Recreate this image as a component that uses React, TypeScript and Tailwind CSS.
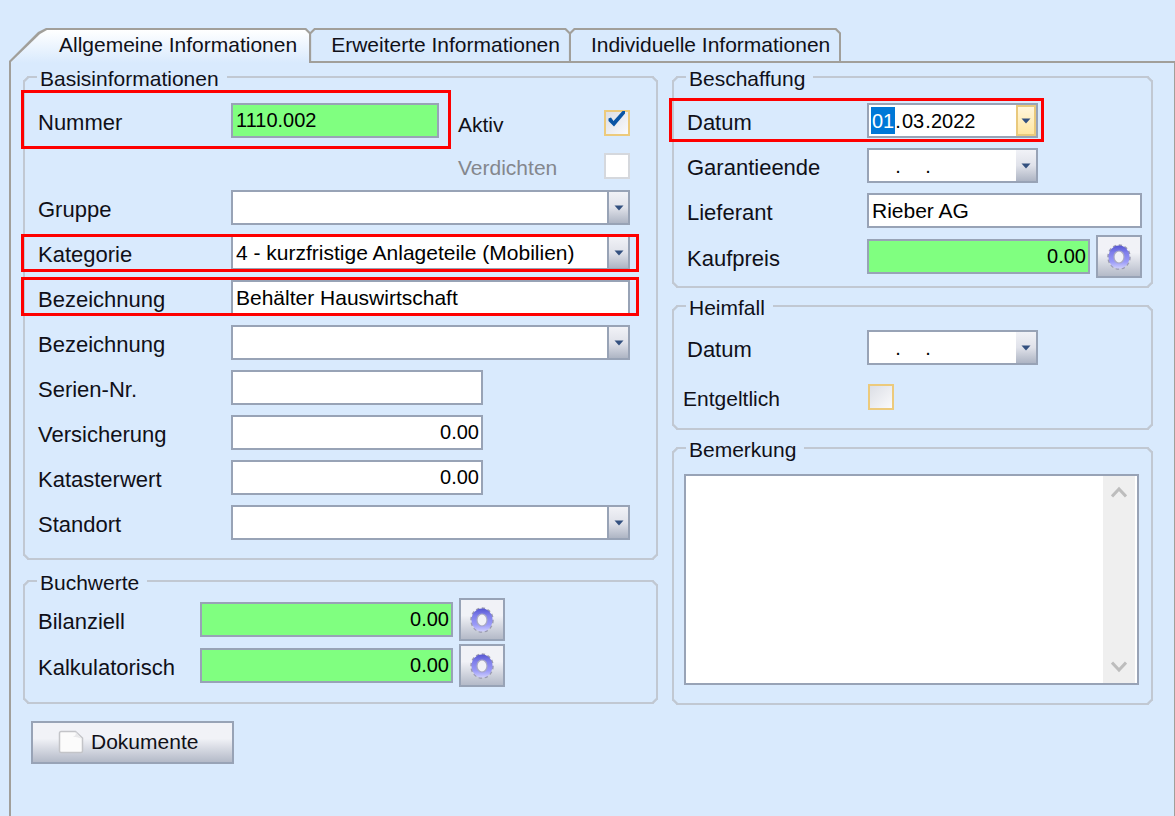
import { useState, type ReactNode } from "react";
import clsx from "clsx";

const box = "h-[35px] border-2 border-[#98a3b6] text-black outline-none";

function Marker({ className }: { className: string }) {
    return <span className={clsx("pointer-events-none absolute border-[3px] border-[#fe0000]", className)} />;
}

function Arrow() {
    return (
        <svg width="10" height="6" viewBox="0 0 10 6" aria-hidden="true">
            <path d="M0.5 0.5h9L5 5.5z" fill="#33507f" />
        </svg>
    );
}

function Gear() {
    return (
        <svg width="26" height="28" viewBox="0 0 26 28" aria-hidden="true">
            <defs>
                <linearGradient id="gear" x1="0" y1="0" x2="0" y2="1">
                    <stop offset="0" stopColor="#5555d2" />
                    <stop offset="0.3" stopColor="#7f7fea" />
                    <stop offset="0.7" stopColor="#9a9af8" />
                    <stop offset="1" stopColor="#cfcffc" />
                </linearGradient>
            </defs>
            <ellipse cx="13" cy="14" rx="10.5" ry="11.5" fill="none" stroke="#9a9ab0" strokeWidth="2.5" strokeDasharray="3.2 2.5" />
            <ellipse cx="13" cy="14" rx="10.5" ry="11.5" fill="url(#gear)" />
            <ellipse cx="13" cy="14" rx="5" ry="6" fill="#f1f1f6" stroke="#a9a9c4" strokeWidth="1.2" />
        </svg>
    );
}

function Group({ title, className, children }: { title: string; className: string; children: ReactNode }) {
    return (
        <fieldset className="min-w-0 rounded-[5px] border-2 border-[#c1c8d2] [corner-shape:bevel]">
            <legend className="ml-3 pl-[3px] pr-2 pt-1 text-[21px] leading-5">{title}</legend>
            <div className={className}>{children}</div>
        </fieldset>
    );
}

interface RowProps {
    id: string;
    label: string;
    labelWidth?: string;
    className?: string;
    children: ReactNode;
}

function Row({ id, label, labelWidth = "w-[193px]", className, children }: RowProps) {
    return (
        <div className={clsx("relative flex items-center", className)}>
            <label htmlFor={id} className={clsx("shrink-0 pt-1 text-[22px] leading-6", labelWidth)}>
                {label}
            </label>
            {children}
        </div>
    );
}

interface TextBoxProps {
    id: string;
    value?: string;
    className: string;
}

function TextBox({ id, value = "", className }: TextBoxProps) {
    return <input id={id} type="text" defaultValue={value} className={clsx(box, "min-w-0 pl-[3px] pr-[2px]", className)} />;
}

function ComboBox({ id, value = "" }: { id: string; value?: string }) {
    return (
        <div className="relative min-w-0 flex-1">
            <select id={id} defaultValue={value} className={clsx(box, "block w-full appearance-none bg-white pb-[2px] pl-[3px] pr-6 text-[21px]")}>
                <option value={value}>{value}</option>
            </select>
            <span className="pointer-events-none absolute inset-y-0 right-0 flex w-[23px] items-center justify-center border-2 border-[#98a3b6] bg-linear-to-b from-[#f1f2f7] via-[#e0e2ea] to-[#aeb5c4]">
                <Arrow />
            </span>
        </div>
    );
}

interface DateBoxProps {
    id: string;
    day?: string;
    month?: string;
    year?: string;
    active?: boolean;
}

function DateBox({ id, day = "", month = "", year = "", active = false }: DateBoxProps) {
    const part = "h-[27px] outline-none";
    return (
        <div className={clsx(box, "flex w-[171px] items-center bg-white pl-[2px] text-[20px]")}>
            <input id={id} defaultValue={day} className={clsx(part, "w-6 text-center", active && "bg-[#0078d7] text-white")} />
            <span className="w-[6px] text-center">.</span>
            <input aria-label="Monat" defaultValue={month} className={clsx(part, "w-6 text-center")} />
            <span className="w-[6px] text-center">.</span>
            <input aria-label="Jahr" defaultValue={year} className={clsx(part, "w-[48px]")} />
            <button
                type="button"
                aria-label="Kalender öffnen"
                className={clsx(
                    "ml-auto flex w-5 items-center justify-center self-stretch",
                    active
                        ? "border-2 border-[#e9c97c] bg-linear-to-b from-[#fff6dc] to-[#ffe6a0]"
                        : "bg-linear-to-b from-[#f1f2f7] via-[#e0e2ea] to-[#aeb5c4]"
                )}
            >
                <Arrow />
            </button>
        </div>
    );
}

interface CheckProps {
    id: string;
    checked?: boolean;
    disabled?: boolean;
}

function Check({ id, checked = false, disabled = false }: CheckProps) {
    return (
        <span className="relative flex">
            <input
                id={id}
                type="checkbox"
                defaultChecked={checked}
                disabled={disabled}
                className={clsx(
                    "peer size-[26px] appearance-none border-2",
                    disabled ? "border-[#d5d8dd] bg-white" : "border-[#ecca7c] bg-linear-to-br from-[#dcdfe6] to-[#fafafc]"
                )}
            />
            <svg
                className="pointer-events-none absolute left-1 top-0 hidden peer-checked:block"
                width="18"
                height="18"
                viewBox="0 0 18 18"
                aria-hidden="true"
            >
                <path d="M0.500 8.500L3 7.500l2.500 3.500L14.500 1h2.500v2.500L6 16.500L0.500 11z" fill="#0a55a5" />
            </svg>
        </span>
    );
}

function GearButton({ label }: { label: string }) {
    return (
        <button
            type="button"
            aria-label={label}
            className="flex h-[43px] w-[46px] shrink-0 items-center justify-center border-2 border-[#98a3b6] bg-linear-to-b from-[#f1f2f7] from-40% to-[#b4bac8]"
        >
            <Gear />
        </button>
    );
}

const tabs = ["Allgemeine Informationen", "Erweiterte Informationen", "Individuelle Informationen"];

function Tabs() {
    const [active, setActive] = useState(0);

    return (
        <div role="tablist" className="flex pl-[9px] pt-7">
            {tabs.map((tab, i) => (
                <button
                    key={tab}
                    type="button"
                    role="tab"
                    aria-selected={active === i}
                    onClick={() => setActive(i)}
                    className={clsx(
                        "h-[35px] shrink-0 whitespace-nowrap bg-[#a19f9a] px-[2px] pt-[2px] text-[21px]",
                        active === i ? "pb-0" : "pb-[2px]",
                        i === 0
                            ? "[clip-path:polygon(0_100%,0_33px,29px_4px,37px_0,calc(100%-5px)_0,100%_5px,100%_100%)]"
                            : "-ml-[2px] [clip-path:polygon(0_100%,0_5px,5px_0,calc(100%-5px)_0,100%_5px,100%_100%)]"
                    )}
                >
                    <span
                        className={clsx(
                            "flex h-full items-center",
                            active === i ? "bg-linear-to-b from-white to-[#d9eafd] pb-[3px]" : "bg-[#d9eafd] pb-px",
                            i === 0
                                ? "pl-12 pr-3 [clip-path:polygon(0_100%,0_32px,29px_4px,36px_0,calc(100%-4px)_0,100%_4px,100%_100%)]"
                                : "pl-5 pr-[9px] [clip-path:polygon(0_100%,0_4px,4px_0,calc(100%-4px)_0,100%_4px,100%_100%)]"
                        )}
                    >
                        {tab}
                    </span>
                </button>
            ))}
            <span className="flex-1 border-b-2 border-[#a19f9a]" />
        </div>
    );
}

export default function App() {
    return (
        <div className="flex min-h-screen flex-col bg-[#d9eafd] font-['Liberation_Sans',Arial,sans-serif] text-[#101018]">
            <Tabs />
            <main className="ml-[9px] flex-1 border-l-2 border-r border-[#a19f9a] pb-8 pl-3 pr-[21px] pt-[2px]">
                <div className="grid grid-cols-[635fr_481fr] gap-x-[14px]">
                    <div className="flex min-w-0 flex-col gap-[9px]">
                        <Group title="Basisinformationen" className="pb-[18px] pl-[13px] pr-[26px]">
                            <div className="flex flex-col gap-[10px] pt-[14px]">
                                <div className="flex items-start justify-between pb-px">
                                    <Row id="nummer" label="Nummer">
                                        <TextBox id="nummer" value="1110.002" className="w-[208px] bg-[#80ff80] text-[20px]" />
                                        <Marker className="-bottom-[11px] -left-[17px] -right-3 -top-[13px]" />
                                    </Row>
                                    <div className="grid grid-cols-[146px_26px] items-center gap-y-[17px] pt-[7px] text-[21px] leading-[22px]">
                                        <label htmlFor="aktiv" className="pt-1">Aktiv</label>
                                        <Check id="aktiv" checked />
                                        <label htmlFor="verdichten" className="pt-1 text-[#84878d]">Verdichten</label>
                                        <Check id="verdichten" disabled />
                                    </div>
                                </div>
                                <Row id="gruppe" label="Gruppe">
                                    <ComboBox id="gruppe" />
                                </Row>
                                <Row id="kategorie" label="Kategorie">
                                    <ComboBox id="kategorie" value="4 - kurzfristige Anlageteile (Mobilien)" />
                                    <Marker className="-bottom-[2px] -left-[17px] -right-[9px] -top-px" />
                                </Row>
                                <Row id="bezeichnung1" label="Bezeichnung">
                                    <TextBox id="bezeichnung1" value="Behälter Hauswirtschaft" className="flex-1 bg-white text-[21px]" />
                                    <Marker className="-bottom-px -left-[17px] -right-[9px] -top-[3px]" />
                                </Row>
                                <Row id="bezeichnung2" label="Bezeichnung">
                                    <ComboBox id="bezeichnung2" />
                                </Row>
                                <Row id="serie" label="Serien-Nr.">
                                    <TextBox id="serie" className="w-[252px] bg-white text-[21px]" />
                                </Row>
                                <Row id="versicherung" label="Versicherung">
                                    <TextBox id="versicherung" value="0.00" className="w-[252px] bg-white text-right text-[20px]" />
                                </Row>
                                <Row id="kataster" label="Katasterwert">
                                    <TextBox id="kataster" value="0.00" className="w-[252px] bg-white text-right text-[20px]" />
                                </Row>
                                <Row id="standort" label="Standort">
                                    <ComboBox id="standort" />
                                </Row>
                            </div>
                        </Group>

                        <Group title="Buchwerte" className="pb-[15px] pl-[13px] pr-[26px]">
                            <div className="flex flex-col gap-[3px] pt-[5px]">
                                <Row id="bilanziell" label="Bilanziell" labelWidth="w-[162px]">
                                    <TextBox id="bilanziell" value="0.00" className="mr-[6px] w-[253px] bg-[#80ff80] text-right text-[20px]" />
                                    <GearButton label="Bilanziell berechnen" />
                                </Row>
                                <Row id="kalkulatorisch" label="Kalkulatorisch" labelWidth="w-[162px]">
                                    <TextBox id="kalkulatorisch" value="0.00" className="mr-[6px] w-[253px] bg-[#80ff80] text-right text-[20px]" />
                                    <GearButton label="Kalkulatorisch berechnen" />
                                </Row>
                            </div>
                        </Group>
                    </div>

                    <div className="flex min-w-0 flex-col gap-[6px]">
                        <Group title="Beschaffung" className="pb-2 pl-[13px] pr-[9px]">
                            <div className="flex flex-col gap-[10px] pt-[14px]">
                                <Row id="datum" label="Datum" labelWidth="w-[180px]" className="w-fit">
                                    <DateBox id="datum" day="01" month="03" year="2022" active />
                                    <Marker className="-bottom-1 -left-[18px] -right-[6px] -top-[5px]" />
                                </Row>
                                <Row id="garantie" label="Garantieende" labelWidth="w-[180px]">
                                    <DateBox id="garantie" />
                                </Row>
                                <Row id="lieferant" label="Lieferant" labelWidth="w-[180px]">
                                    <TextBox id="lieferant" value="Rieber AG" className="flex-1 bg-white text-[21px]" />
                                </Row>
                                <Row id="kaufpreis" label="Kaufpreis" labelWidth="w-[180px]" className="-mt-[3px]">
                                    <TextBox id="kaufpreis" value="0.00" className="mr-[6px] flex-1 bg-[#80ff80] text-right text-[20px]" />
                                    <GearButton label="Kaufpreis berechnen" />
                                </Row>
                            </div>
                        </Group>

                        <Group title="Heimfall" className="pb-[18px] pl-[9px] pr-[10px]">
                            <div className="flex flex-col gap-[19px] pt-3">
                                <Row id="heimfall" label="Datum" labelWidth="w-[184px] pl-1">
                                    <DateBox id="heimfall" />
                                </Row>
                                <div className="flex items-center text-[21px] leading-[22px]">
                                    <label htmlFor="entgeltlich" className="w-[185px] shrink-0 pt-1">Entgeltlich</label>
                                    <Check id="entgeltlich" />
                                </div>
                            </div>
                        </Group>

                        <Group title="Bemerkung" className="pb-[18px] pl-[10px] pr-3">
                            <div className="pt-[14px]">
                                <div className="flex h-[211px] border-2 border-[#98a3b6] bg-white pr-[2px]">
                                    <textarea aria-label="Bemerkung" className="min-w-0 flex-1 resize-none p-1 text-[21px] outline-none" />
                                    <div className="flex w-8 flex-col items-center justify-between bg-[#efefef] py-[10px]">
                                        <button type="button" aria-label="Nach oben">
                                            <svg width="16" height="12" viewBox="0 0 16 12" aria-hidden="true">
                                                <path d="M1 10.5L8 3l7 7.5" fill="none" stroke="#bdbdbd" strokeWidth="3" />
                                            </svg>
                                        </button>
                                        <button type="button" aria-label="Nach unten">
                                            <svg width="16" height="12" viewBox="0 0 16 12" aria-hidden="true">
                                                <path d="M1 1.5L8 9l7-7.5" fill="none" stroke="#bdbdbd" strokeWidth="3" />
                                            </svg>
                                        </button>
                                    </div>
                                </div>
                            </div>
                        </Group>
                    </div>
                </div>

                <button
                    type="button"
                    className="ml-2 mt-4 flex h-[43px] w-[203px] items-center gap-[7px] border-2 border-[#98a3b6] bg-linear-to-b from-[#f1f2f7] from-40% to-[#b4bac8] pb-[2px] pl-[25px] text-[21px]"
                >
                    <svg width="26" height="24" viewBox="0 0 26 24" aria-hidden="true">
                        <path d="M3 1.5h14.5l7 6.5v13a1.5 1.5 0 0 1-1.5 1.500H3A1.5 1.5 0 0 1 1.5 21V3A1.5 1.5 0 0 1 3 1.5z" fill="#fbfbfb" stroke="#c3c4c8" strokeWidth="1.5" />
                        <path d="M17.5 1.5c1 3-.5 5-3 5.500c4 0 7 .5 10 2.500z" fill="#e9e9eb" />
                    </svg>
                    Dokumente
                </button>
            </main>
        </div>
    );
}
